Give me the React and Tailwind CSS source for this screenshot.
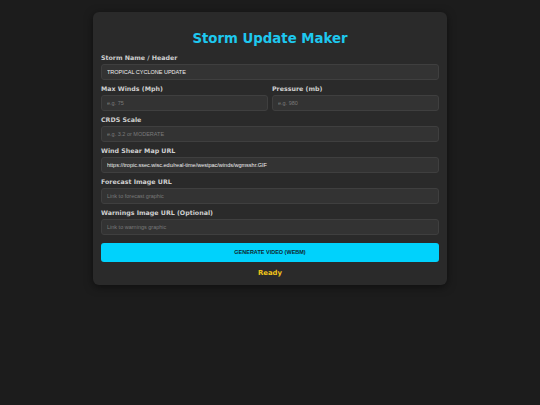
import React from "react";

const labelCls =
  "block text-[6.3px] leading-[9px] font-bold text-[#cfcfcf] mb-[2px] [font-family:'DejaVu_Sans',sans-serif]";
const inputCls =
  "block w-full h-[16px] px-[5px] bg-[#333333] border border-[#3f3f3f] rounded-[3px] text-[5.5px] text-[#eeeeee] placeholder:text-[#7a7a7a] outline-none [font-family:'Liberation_Sans',Arial,sans-serif]";

function Field({ label, value, placeholder }) {
  return (
    <div className="mb-[4px]">
      <label className={labelCls}>{label}</label>
      <input className={inputCls} defaultValue={value} placeholder={placeholder} readOnly />
    </div>
  );
}

export default function App() {
  return (
    <div className="w-[540px] h-[405px] bg-[#1c1c1c] pt-[12px]">
      <div className="mx-auto w-[354px] bg-[#2a2a2a] rounded-[6px] px-[8px] pt-[19px] pb-[7px] shadow-[0_2px_8px_rgba(0,0,0,0.5)]">
        <h1 className="text-center text-[13.3px] leading-[16px] font-bold text-[#1ec8ef] mb-[6px] [font-family:'DejaVu_Sans',sans-serif]">
          Storm Update Maker
        </h1>
        <Field label="Storm Name / Header" value="TROPICAL CYCLONE UPDATE" />
        <div className="grid grid-cols-2 gap-x-[4px]">
          <Field label="Max Winds (Mph)" placeholder="e.g. 75" />
          <Field label="Pressure (mb)" placeholder="e.g. 980" />
        </div>
        <Field label="CRDS Scale" placeholder="e.g. 3.2 or MODERATE" />
        <Field
          label="Wind Shear Map URL"
          value="https://tropic.ssec.wisc.edu/real-time/westpac/winds/wgmsshr.GIF"
        />
        <Field label="Forecast Image URL" placeholder="Link to forecast graphic" />
        <Field label="Warnings Image URL (Optional)" placeholder="Link to warnings graphic" />
        <button className="block mt-[8px] w-full h-[19px] rounded-[3px] bg-[#00d2fc] text-[5.5px] leading-[19px] font-bold text-[#0d2630] [font-family:'Liberation_Sans',Arial,sans-serif]">
          GENERATE VIDEO (WEBM)
        </button>
        <div className="mt-[6px] text-center text-[6.9px] leading-[10px] font-bold text-[#f0c419] [font-family:'DejaVu_Sans',sans-serif]">
          Ready
        </div>
      </div>
    </div>
  );
}
